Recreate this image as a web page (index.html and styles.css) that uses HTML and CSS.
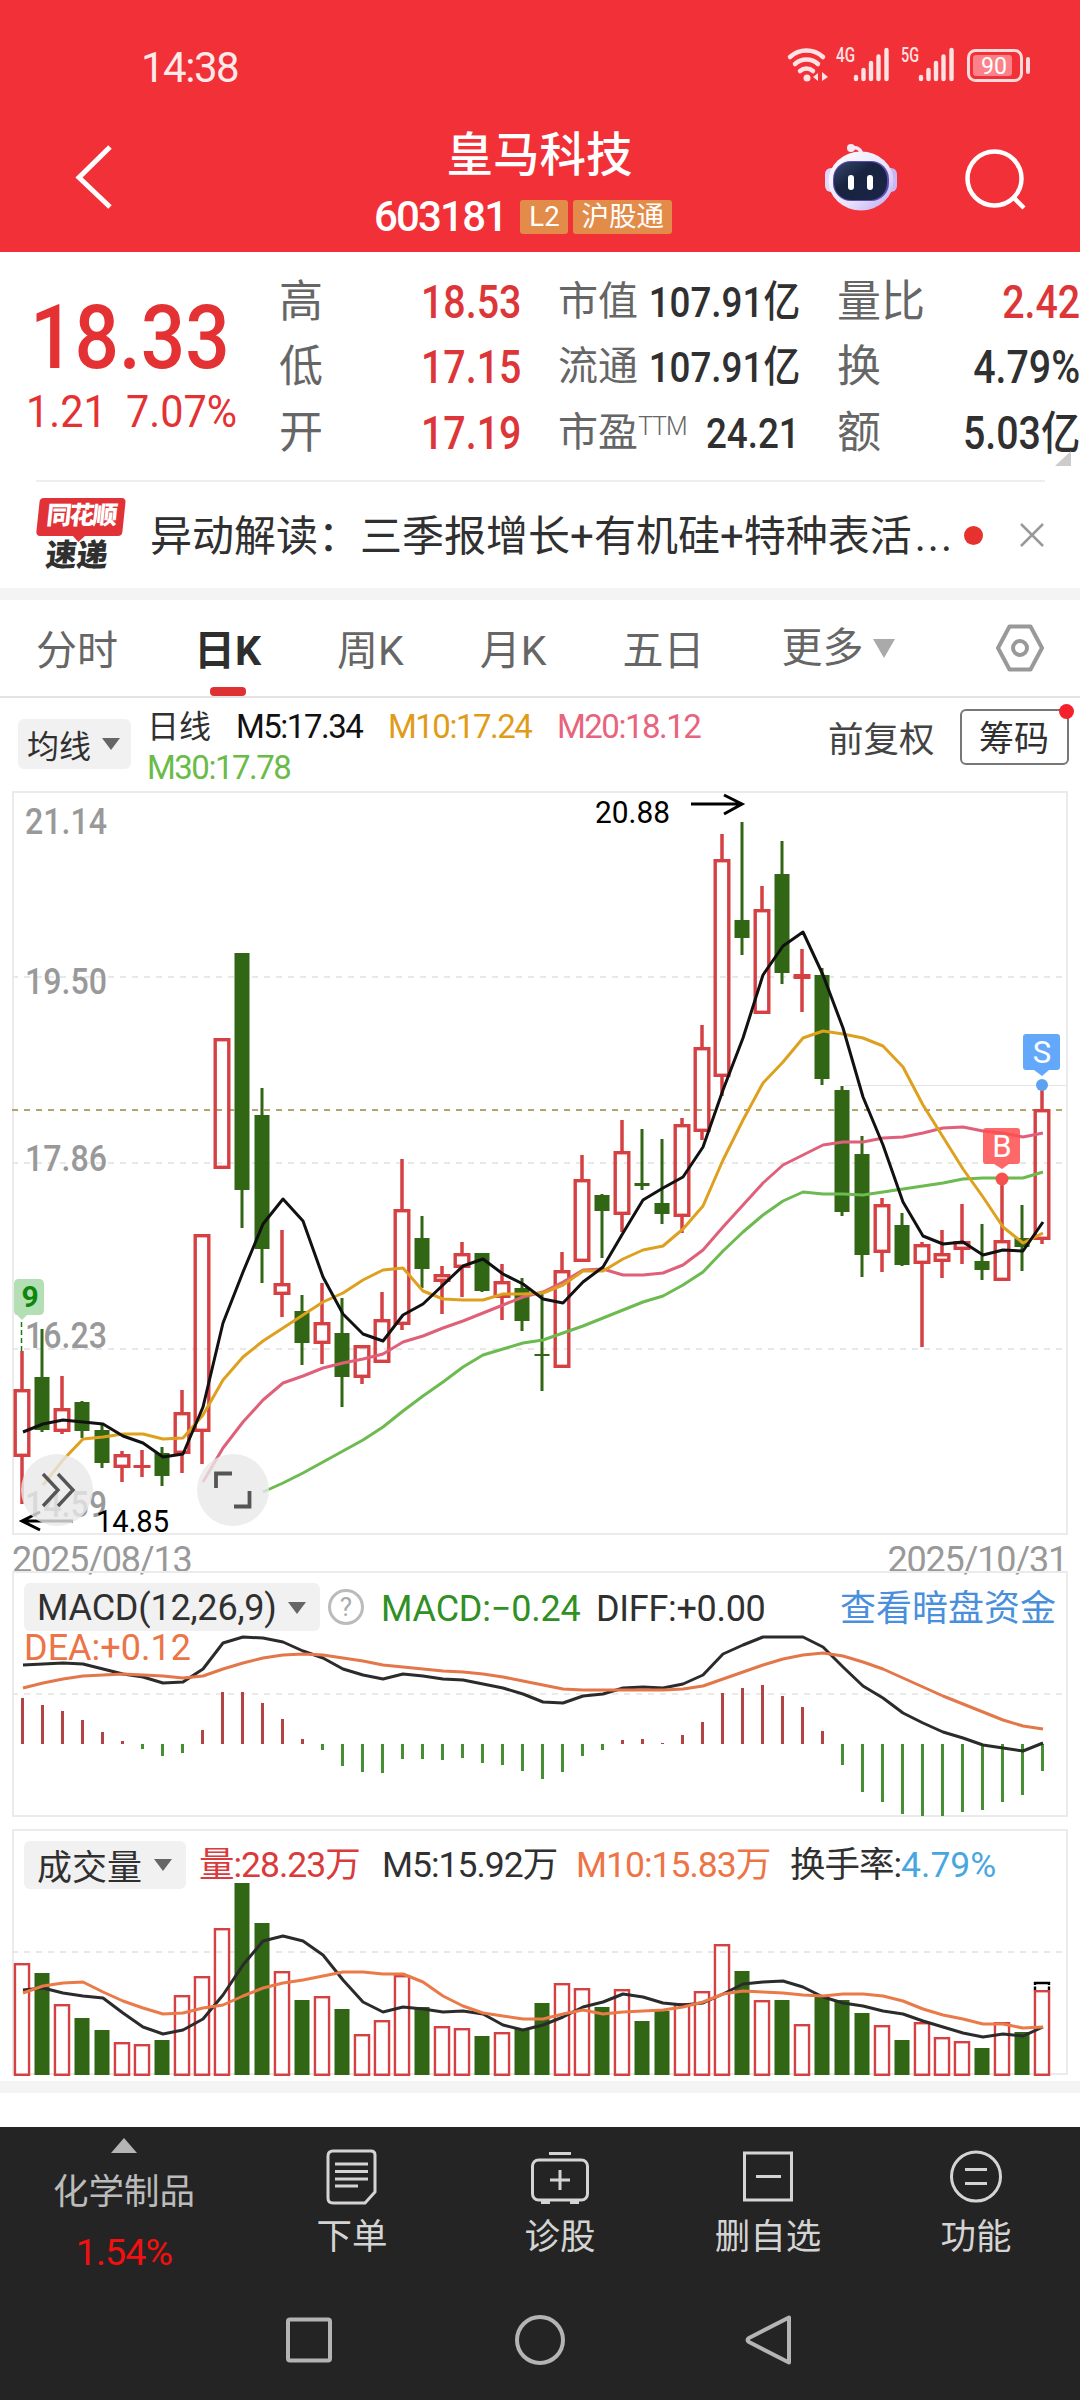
FILE: index.html
```html
<!DOCTYPE html>
<html lang="zh-CN">
<head>
    <meta charset="UTF-8">
    <meta name="viewport" content="width=device-width, initial-scale=1.0">
    <title>皇马科技 603181</title>
    <link rel="stylesheet" href="styles.css">
</head>
<body>
    <header class="top">
        <div class="status-bar">
            <span class="time">14:38</span>
            <svg class="status-icons" width="250" height="50" viewBox="784 35 250 50">
                <g fill="none" stroke="#ffe3e3" stroke-width="4.5" stroke-linecap="round">
                    <path d="M790 57a24 24 0 0 1 33 0"/>
                    <path d="M795 64a17 17 0 0 1 23 0"/>
                    <path d="M800 71a10 10 0 0 1 13 0"/>
                </g>
                <circle cx="807" cy="78" r="3.5" fill="#ffe3e3"/>
                <path d="M818 73v8l-5-4zM822 81v-9l6 5z" fill="#ffe3e3"/>
                <text x="836" y="62" class="net" textLength="19" lengthAdjust="spacingAndGlyphs">4G</text>
                <text x="901" y="62" class="net" textLength="18" lengthAdjust="spacingAndGlyphs">5G</text>
                <g stroke="#ffe3e3" stroke-width="4.4" stroke-linecap="round">
                    <path d="M856 77v2M863.500 70v9M871 63v16M878.500 56.500v22.500M886.500 50v29"/>
                    <path d="M921 77v2M928.500 70v9M936 63v16M943.500 56.500v22.500M951.500 50v29"/>
                </g>
                <rect x="968.500" y="50.500" width="53" height="30" rx="7" fill="none" stroke="#ffdada" stroke-width="3"/>
                <rect x="973" y="55" width="39" height="21" rx="3" fill="#fb8289"/>
                <path d="M1028 59v13" stroke="#ffdada" stroke-width="4" stroke-linecap="round"/>
                <text x="981" y="74" class="battery" textLength="26" lengthAdjust="spacingAndGlyphs">90</text>
            </svg>
        </div>
        <div class="title-bar">
            <svg class="back" width="50" height="76" viewBox="70 139 50 76">
                <path d="M110 147L79 177.500L110 207" fill="none" stroke="#fff" stroke-width="5"/>
            </svg>
            <div class="stock">
                <h1>皇马科技</h1>
                <div class="code-row">
                    <span class="code">603181</span>
                    <span class="badge">L2</span>
                    <span class="badge">沪股通</span>
                </div>
            </div>
            <svg class="tools" width="210" height="76" viewBox="820 139 210 76">
                <defs>
                    <linearGradient id="shell" x1="0" y1="0" x2="1" y2="1">
                        <stop offset="0" stop-color="#ffffff"/>
                        <stop offset=".6" stop-color="#e9e2fb"/>
                        <stop offset="1" stop-color="#b9a3f2"/>
                    </linearGradient>
                    <linearGradient id="face" x1="0" y1="0" x2="1" y2="1">
                        <stop offset="0" stop-color="#3b4870"/>
                        <stop offset=".4" stop-color="#17233f"/>
                        <stop offset="1" stop-color="#1b2547"/>
                    </linearGradient>
                </defs>
                <path d="M850 149q10-4 12 6" fill="none" stroke="#f4e8f6" stroke-width="3.500"/>
                <circle cx="851" cy="148" r="4" fill="#f4e8f6"/>
                <rect x="825" y="168" width="12" height="24" rx="6" fill="#e2d6fa"/>
                <rect x="884" y="168" width="13" height="24" rx="6" fill="#c9b6f5"/>
                <ellipse cx="861" cy="181" rx="32.500" ry="29.500" fill="url(#shell)"/>
                <rect x="833" y="161" width="56" height="40" rx="18" fill="#5a4cb0"/>
                <rect x="834" y="162" width="53" height="38" rx="17" fill="url(#face)"/>
                <rect x="848" y="175" width="6" height="15" rx="3" fill="#fff"/>
                <rect x="867" y="175" width="6" height="15" rx="3" fill="#fff"/>
                <circle cx="994.500" cy="178.500" r="27" fill="none" stroke="#fff" stroke-width="4.500"/>
                <path d="M1013 197L1024 208" stroke="#fff" stroke-width="4.500"/>
            </svg>
        </div>
    </header>

    <section class="quote">
        <div class="price-box">
            <div class="price"><span>18.33</span></div>
            <div class="change"><span>1.21</span><span>7.07%</span></div>
        </div>
        <div class="stats">
            <div class="stat"><label>高</label><b class="up">18.53</b></div>
            <div class="stat"><label>低</label><b class="up">17.15</b></div>
            <div class="stat"><label>开</label><b class="up">17.19</b></div>
        </div>
        <div class="stats mid">
            <div class="stat"><label>市值</label><b>107.91亿</b></div>
            <div class="stat"><label>流通</label><b>107.91亿</b></div>
            <div class="stat"><label>市盈<sup>TTM</sup></label><b>24.21</b></div>
        </div>
        <div class="stats">
            <div class="stat"><label>量比</label><b class="up">2.42</b></div>
            <div class="stat"><label>换</label><b>4.79%</b></div>
            <div class="stat"><label>额</label><b>5.03亿</b></div>
        </div>
        <i class="corner"></i>
    </section>

    <section class="news">
        <div class="news-logo">
            <span class="logo-top">同花顺</span>
            <span class="logo-bottom">速递</span>
        </div>
        <p>异动解读：三季报增长+有机硅+特种表活<span class="dots">...</span></p>
        <i class="dot"></i>
        <svg width="26" height="26" viewBox="0 0 26 26"><path d="M2 2L24 24M24 2L2 24" stroke="#999" stroke-width="2.500"/></svg>
    </section>

    <nav class="tabs">
        <a>分时</a>
        <a class="active">日K</a>
        <a>周K</a>
        <a>月K</a>
        <a>五日</a>
        <a class="more">更多<i class="tri"></i></a>
        <svg width="50" height="48" viewBox="0 0 50 48">
            <path d="M14.500 2.500h21L47 24 35.500 45.500h-21L3 24z" fill="none" stroke="#999" stroke-width="4" stroke-linejoin="round"/>
            <circle cx="25" cy="24" r="7" fill="none" stroke="#999" stroke-width="4"/>
        </svg>
    </nav>

    <section class="ma-row">
        <button class="pill ma-pill">均线<i class="tri"></i></button>
        <div class="ma-list">
            <span class="cjk">日线</span>
            <span class="m5">M5:17.34</span>
            <span class="m10">M10:17.24</span>
            <span class="m20">M20:18.12</span>
            <span class="m30">M30:17.78</span>
        </div>
        <span class="adjust">前复权</span>
        <button class="chips">筹码<i></i></button>
    </section>

    <svg id="kline" width="1080" height="750" viewBox="0 790 1080 750"></svg>
    <div class="dates"><span>2025/08/13</span><span>2025/10/31</span></div>

    <section class="panel macd">
        <svg id="macd" width="1080" height="250" viewBox="0 1571 1080 250"></svg>
        <div class="legend">
            <button class="pill">MACD(12,26,9)<i class="tri"></i></button>
            <i class="help">?</i>
            <span class="green">MACD:−0.24</span>
            <span class="diff">DIFF:+0.00</span>
            <a>查看暗盘资金</a>
        </div>
        <div class="legend-2">DEA:+0.12</div>
    </section>

    <section class="panel volume">
        <svg id="volume" width="1080" height="260" viewBox="0 1821 1080 260"></svg>
        <div class="legend">
            <button class="pill">成交量<i class="tri"></i></button>
            <span class="red">量:28.23万</span>
            <span class="v5">M5:15.92万</span>
            <span class="v10">M10:15.83万</span>
            <span class="turn">换手率:<em>4.79%</em></span>
        </div>
    </section>
    <div class="band"></div>

    <footer>
        <div class="actions">
            <div class="sector">
                <i class="tri-up"></i>
                <span>化学制品</span>
                <b>1.54%</b>
            </div>
            <div class="action">
                <svg viewBox="0 0 60 60">
                    <path d="M11 4h38q4 0 4 4v37L43 56H11q-5 0-5-5V9q0-5 5-5z"/>
                    <path d="M13 17h33M13 24.500h33M13 32h33M13 39h23"/>
                </svg>
                <span>下单</span>
            </div>
            <div class="action">
                <svg viewBox="0 0 60 60">
                    <rect x="2.500" y="13" width="55" height="40" rx="6"/>
                    <path d="M19 6.500h22M30 23v20M20 33h20M11 55.500h9M40 55.500h9"/>
                </svg>
                <span>诊股</span>
            </div>
            <div class="action">
                <svg viewBox="0 0 60 60">
                    <rect x="6.500" y="6" width="47" height="47"/>
                    <path d="M18 29.500h25"/>
                </svg>
                <span>删自选</span>
            </div>
            <div class="action">
                <svg viewBox="0 0 60 60">
                    <circle cx="30" cy="29.500" r="24.500"/>
                    <path d="M19 22.500h22M19 36.500h22"/>
                </svg>
                <span>功能</span>
            </div>
        </div>
        <div class="sys-nav">
            <svg width="52" height="52" viewBox="0 0 52 52"><rect x="5" y="5.500" width="42" height="41" rx="2"/></svg>
            <svg width="52" height="52" viewBox="0 0 52 52"><circle cx="26" cy="26" r="23"/></svg>
            <svg width="52" height="52" viewBox="0 0 52 52"><path d="M44 3.500v45L4 28q-3-2 0-4z"/></svg>
        </div>
    </footer>

    <script src="script.js"></script>
</body>
</html>
```
FILE: styles.css
```css
* {
    margin: 0;
    padding: 0;
    box-sizing: border-box;
}

body {
    width: 1080px;
    height: 2400px;
    overflow: hidden;
    background: #fff;
    color: #303030;
    font-family: Roboto, "Noto Sans CJK SC", sans-serif;
}

svg {
    display: block;
}

i, em {
    font-style: normal;
}

button {
    border: none;
    font-family: inherit;
    color: inherit;
}

/* red header */
.top {
    height: 252px;
    background: #f13038;
    color: #fff;
}

.status-bar {
    height: 112px;
    padding: 35px 46px 0 141px;
    display: flex;
    justify-content: space-between;
}

.time {
    margin-top: 11px;
    font-size: 42px;
    line-height: 44px;
    letter-spacing: -1.500px;
    color: #ffe9e9;
}

.net {
    font-size: 20px;
    font-weight: 500;
    fill: #ffe3e3;
}

.battery {
    font-size: 24px;
    fill: #fff;
}

.title-bar {
    height: 140px;
    padding: 0 50px 0 70px;
    display: flex;
    justify-content: space-between;
}

.back,
.tools {
    margin-top: 27px;
}

.stock {
    width: 400px;
    margin-left: 150px;
    text-align: center;
}

.stock h1 {
    margin-top: 16px;
    margin-right: 11px;
    font-size: 46.500px;
    line-height: 54px;
    font-weight: 500;
}

.code-row {
    display: flex;
    justify-content: center;
    align-items: center;
    gap: 5px;
    height: 44px;
    margin-top: 13px;
    margin-right: 44px;
}

.code {
    font-size: 42px;
    line-height: 44px;
    letter-spacing: -1.800px;
    font-weight: 500;
    margin-right: 9px;
}

.badge {
    height: 34px;
    line-height: 33px;
    padding: 0 8px 0 9px;
    border-radius: 3px;
    background: #e38c4a;
    font-size: 27.500px;
}

/* quote */
.quote {
    position: relative;
    display: flex;
    height: 230px;
}

.price-box {
    width: 280px;
    color: #e43234;
}

.price {
    height: 90px;
    margin-top: 41px;
    padding-left: 30px;
    font-size: 89px;
    line-height: 90px;
    font-weight: 500;
}

.price span,
.change span,
.stat b {
    display: inline-block;
    transform: scaleX(.88);
    transform-origin: left center;
}

.change {
    display: flex;
    margin-top: 3px;
    padding-left: 26px;
    font-size: 44px;
    line-height: 52px;
}

.change span {
    width: 100px;
    transform: scaleX(.94);
}

.stats {
    width: 241px;
    margin-right: 38px;
    padding-top: 17px;
    flex-shrink: 0;
}

.stats:nth-child(4) {
    margin-right: 0;
    width: 242px;
}

.stat {
    display: flex;
    justify-content: space-between;
    align-items: center;
    height: 65.500px;
    white-space: nowrap;
}

.stat label {
    font-size: 44px;
    line-height: 60px;
    color: #666;
    margin-left: -1px;
}

.mid .stat label {
    font-size: 40px;
}

.stat sup {
    font-size: 25px;
    line-height: 10px;
    font-weight: 300;
    letter-spacing: -1px;
    vertical-align: 11px;
}

.stat b {
    font-size: 46px;
    line-height: 60px;
    font-weight: 500;
    transform: scaleX(.855);
    transform-origin: right center;
}

.mid .stat b {
    margin-left: -30px;
    font-size: 43px;
}

.up {
    color: #dc3639;
}

.corner {
    position: absolute;
    right: 9px;
    bottom: 16px;
    border-left: 16px solid transparent;
    border-bottom: 15px solid #ccc;
}

/* news strip */
.news {
    display: flex;
    align-items: center;
    height: 108px;
    margin: -2px 35px 0 36px;
    border-top: 2px solid #eee;
}

.news-logo {
    width: 88px;
    margin-right: 28px;
    text-align: center;
    transform: skewX(-6deg);
    font-weight: 900;
}

.logo-top {
    display: block;
    height: 38px;
    line-height: 36px;
    border-radius: 4px;
    background: #e13238;
    color: #fff;
    font-size: 25px;
    letter-spacing: -2px;
}

.logo-top::after {
    content: "";
    display: block;
    width: 0;
    margin: 0 auto;
    border: 7px solid transparent;
    border-top-color: #e13238;
    position: relative;
    top: 1px;
}

.logo-bottom {
    display: block;
    margin-top: 3px;
    font-size: 31px;
    line-height: 34px;
}

.news p {
    width: 805px;
    padding-top: 3px;
    font-size: 42px;
    line-height: 60px;
    white-space: nowrap;
}

.dots {
    letter-spacing: 2px;
    margin-left: 3px;
}

.dot {
    width: 19px;
    height: 19px;
    margin: 0 36px 0 10px;
    border-radius: 50%;
    background: #e6312f;
    flex-shrink: 0;
}

.news svg {
    flex-shrink: 0;
}

/* period tabs */
.tabs {
    display: flex;
    align-items: center;
    height: 110px;
    padding: 0 35px 0 36px;
    border-top: 12px solid #f4f4f4;
    border-bottom: 2px solid #e4e4e4;
    font-size: 41px;
    color: #666;
}

.tabs a {
    position: relative;
    height: 96px;
    line-height: 102px;
    margin-right: 76px;
    white-space: nowrap;
}

.tabs a.active {
    color: #2e2e2e;
    font-weight: 700;
}

.tabs .active::after {
    content: "";
    position: absolute;
    left: 16px;
    bottom: 0;
    width: 36px;
    height: 9px;
    border-radius: 4px;
    background: #dd3133;
}

.tabs .more {
    display: flex;
    align-items: center;
    margin-left: 1px;
    margin-right: auto;
}

.tri {
    display: inline-block;
    border: 9px solid transparent;
    border-top: 12px solid #666;
    border-bottom: 0;
}

.more .tri {
    border-width: 19px 11px 0;
    border-top-color: #aaa;
    margin-left: 9px;
}

/* moving averages */
.ma-row {
    display: flex;
    height: 92px;
    padding-left: 18px;
}

.pill {
    display: flex;
    align-items: center;
    justify-content: space-between;
    background: #f1f1f1;
    border-radius: 6px;
}

.ma-pill {
    width: 113px;
    height: 50px;
    margin-top: 21px;
    padding: 0 11px 0 9px;
    font-size: 32px;
}

.ma-list {
    display: grid;
    grid-template-columns: 89px 152px 169px 270px;
    grid-template-rows: 41px 41px;
    width: 681px;
    margin: 8px 0 0 16px;
    font-size: 33px;
    line-height: 42px;
    letter-spacing: -1.500px;
    white-space: nowrap;
}

.ma-list .cjk {
    font-size: 32px;
    letter-spacing: 0;
}

.m5 { color: #111; }
.m10 { color: #e09c18; }
.m20 { color: #e8637c; }
.m30 { color: #6abb48; }

.adjust {
    margin-top: 16px;
    font-size: 35.500px;
    line-height: 52px;
    color: #444;
}

.chips {
    position: relative;
    width: 109px;
    height: 56px;
    margin: 11px 0 0 25px;
    padding-top: 2px;
    border: 2px solid #777;
    border-radius: 6px;
    background: #fff;
    font-size: 35px;
    line-height: 54px;
}

.chips i {
    position: absolute;
    right: -7px;
    top: -7px;
    width: 15px;
    height: 15px;
    border-radius: 50%;
    background: #f5222d;
}

.dates {
    display: flex;
    justify-content: space-between;
    height: 31px;
    padding: 0 13px 0 12px;
    font-size: 36px;
    line-height: 41px;
    letter-spacing: -1.200px;
    color: #999;
}

/* indicator panels */
.panel {
    position: relative;
}

.panel > svg {
    position: absolute;
    left: 0;
    top: 0;
}

.macd { height: 250px; }
.volume { height: 260px; }

.legend,
.legend-2 {
    position: relative;
    display: flex;
    align-items: center;
    height: 48px;
    font-size: 36px;
    line-height: 52px;
    white-space: nowrap;
}

.macd .legend {
    padding: 0 24px;
    top: 12px;
}

.legend .pill {
    height: 48px;
    font-size: 36px;
    padding: 2px 14px 0 13px;
}

.macd .pill {
    width: 296px;
    letter-spacing: -.200px;
}

.macd .legend span,
.macd .legend a {
    padding-top: 3px;
}

.help {
    width: 36px;
    height: 36px;
    margin: 0 17px 0 8px;
    border: 3px solid #bbb;
    border-radius: 50%;
    color: #aaa;
    font-size: 26px;
    line-height: 30px;
    text-align: center;
}

.green {
    width: 215px;
    color: #319024;
    letter-spacing: -.200px;
}

.diff {
    letter-spacing: -.300px;
}

.legend a {
    margin-left: auto;
    color: #4a8fdc;
}

.legend-2 {
    top: 9px;
    height: 40px;
    padding-left: 24px;
    color: #ec7446;
}

.volume .legend {
    padding-left: 24px;
    top: 20px;
    font-size: 35.500px;
    letter-spacing: -1px;
}

.volume .legend span {
    line-height: 44px;
}

.volume .pill {
    width: 162px;
    font-size: 35px;
    margin-right: 13px;
    padding-top: 0;
    padding-bottom: 1px;
}

.red { width: 183px; color: #d93a3c; }
.v5 { width: 194px; }
.v10 { width: 214px; color: #ec7446; }
.turn em { color: #49a6de; letter-spacing: 0; }

.band {
    height: 12px;
    background: #f4f4f4;
}

/* footer */
footer {
    height: 273px;
    margin-top: 34px;
    background: #242424;
    color: #d4d4d4;
}

.actions {
    display: flex;
    height: 160px;
}

.sector {
    width: 248px;
    display: flex;
    flex-direction: column;
    align-items: center;
    padding-top: 11px;
    font-size: 35.500px;
}

.tri-up {
    border: 13px solid transparent;
    border-bottom: 15px solid #b5b5b5;
    border-top: 0;
}

.sector span {
    line-height: 50px;
    margin-top: 14px;
    color: #bbb;
}

.sector b {
    margin-top: 15px;
    font-size: 37.500px;
    font-weight: 400;
    line-height: 40px;
    letter-spacing: -.800px;
    color: #f31010;
}

.action {
    width: 208px;
    display: flex;
    flex-direction: column;
    align-items: center;
    padding-top: 20px;
    font-size: 35.500px;
    line-height: 50px;
}

.action svg {
    width: 60px;
    height: 60px;
    fill: none;
    stroke: #d4d4d4;
    stroke-width: 3;
    margin-bottom: 5px;
}

.sys-nav {
    display: flex;
    gap: 179px;
    padding: 27px 0 0 283px;
}

.sys-nav svg {
    fill: none;
    stroke: #b4b4b4;
    stroke-width: 4;
    stroke-linejoin: round;
}

/* chart text */
.axis {
    font-size: 36px;
    font-weight: 500;
    fill: #999;
}

.mark {
    font-size: 31px;
    fill: #000;
}

.tag {
    font-size: 31px;
    fill: #fff;
    text-anchor: middle;
}

.tag-nine {
    font-size: 30px;
    font-weight: 700;
    fill: #0c870c;
    text-anchor: middle;
}
```
FILE: script.js
```js
const RED = '#d54043';
const GREEN = '#306614';
const x = i => 22 + i * 20;

// [up?, high, top, bottom, low]
const candles = [
    [1, 1351, 1389, 1457, 1504], [0, 1329, 1377, 1430, 1432], [1, 1376, 1408, 1432, 1434], [0, 1401, 1402, 1431, 1438],
    [0, 1425, 1430, 1463, 1468], [1, 1451, 1454, 1468, 1482], [1, 1450, 1465, 1468, 1477], [0, 1447, 1453, 1476, 1486],
    [1, 1390, 1412, 1454, 1473], [1, 1234, 1234, 1432, 1464], [1, 1038, 1038, 1169, 1169], [0, 953, 953, 1190, 1228],
    [0, 1088, 1115, 1249, 1283], [1, 1230, 1283, 1295, 1317], [0, 1295, 1311, 1343, 1365], [1, 1283, 1322, 1344, 1364],
    [0, 1298, 1333, 1377, 1407], [1, 1345, 1345, 1378, 1384], [1, 1292, 1319, 1363, 1363], [1, 1159, 1209, 1325, 1330],
    [0, 1216, 1238, 1269, 1288], [1, 1266, 1274, 1282, 1314], [1, 1242, 1253, 1268, 1297], [0, 1253, 1253, 1291, 1292],
    [1, 1264, 1281, 1298, 1320], [0, 1278, 1288, 1321, 1331], [0, 1293, 1354, 1356, 1391], [1, 1252, 1270, 1368, 1368],
    [1, 1155, 1179, 1262, 1262], [0, 1194, 1195, 1211, 1258], [1, 1120, 1151, 1215, 1232], [0, 1129, 1183, 1186, 1190],
    [0, 1139, 1203, 1214, 1224], [1, 1118, 1124, 1217, 1233], [1, 1025, 1047, 1132, 1140], [1, 834, 859, 1077, 1096],
    [0, 822, 920, 938, 955], [1, 886, 909, 1014, 1014], [0, 841, 874, 973, 984], [1, 949, 974, 979, 1012],
    [0, 968, 975, 1079, 1085], [0, 1086, 1090, 1212, 1216], [0, 1136, 1154, 1255, 1277], [1, 1198, 1204, 1253, 1272],
    [0, 1213, 1225, 1265, 1266], [1, 1242, 1244, 1264, 1347], [1, 1230, 1253, 1262, 1278], [1, 1204, 1241, 1250, 1264],
    [0, 1224, 1261, 1270, 1280], [1, 1179, 1240, 1281, 1281], [0, 1205, 1238, 1247, 1271], [1, 1085, 1109, 1240, 1244]
];

const ma5 = [1432, 1424, 1420, 1422, 1424, 1436, 1443, 1457, 1454, 1407, 1323, 1272, 1224, 1199, 1221, 1277, 1314, 1334, 1341, 1315, 1304, 1285, 1266, 1259, 1274, 1284, 1299, 1303, 1282, 1267, 1233, 1200, 1188, 1177, 1147, 1090, 1038, 975, 946, 932, 975, 1028, 1097, 1145, 1202, 1236, 1244, 1242, 1255, 1250, 1251, 1222];
const ma10 = [1485, 1460, 1439, 1437, 1434, 1434, 1439, 1438, 1415, 1380, 1357, 1341, 1328, 1315, 1302, 1293, 1280, 1270, 1268, 1291, 1299, 1300, 1300, 1294, 1294, 1293, 1285, 1271, 1271, 1259, 1250, 1246, 1229, 1206, 1160, 1120, 1083, 1062, 1038, 1031, 1034, 1038, 1046, 1067, 1105, 1137, 1169, 1197, 1227, 1243, 1233];
const ma20 = [1482, 1448, 1422, 1400, 1383, 1376, 1368, 1363, 1359, 1354, 1342, 1336, 1328, 1321, 1313, 1305, 1297, 1292, 1282, 1270, 1269, 1275, 1275, 1273, 1265, 1250, 1227, 1205, 1183, 1165, 1155, 1145, 1142, 1142, 1138, 1137, 1133, 1128, 1127, 1131, 1133, 1137, 1133];
const ma30 = [1492, 1483, 1473, 1462, 1451, 1440, 1427, 1411, 1396, 1382, 1367, 1355, 1349, 1343, 1340, 1333, 1326, 1318, 1310, 1302, 1296, 1285, 1272, 1251, 1232, 1215, 1201, 1192, 1194, 1194, 1195, 1192, 1189, 1186, 1183, 1179, 1178, 1178, 1178, 1172];

const bars = [1698, 1705, 1711, 1720, 1732, 1741, 1749, 1756, 1753, 1730, 1692, 1692, 1703, 1719, 1739, 1750, 1766, 1772, 1773, 1759, 1759, 1760, 1758, 1763, 1765, 1771, 1779, 1772, 1756, 1750, 1740, 1739, 1743, 1735, 1722, 1693, 1688, 1685, 1696, 1707, 1731, 1765, 1792, 1802, 1814, 1816, 1816, 1812, 1810, 1802, 1795, 1771];
const diff = [1665, 1664, 1663, 1664, 1669, 1674, 1677, 1683, 1682, 1669, 1643, 1637, 1638, 1642, 1651, 1658, 1669, 1675, 1679, 1674, 1676, 1679, 1680, 1684, 1688, 1694, 1702, 1703, 1696, 1694, 1688, 1687, 1688, 1684, 1675, 1654, 1645, 1637, 1637, 1637, 1647, 1667, 1686, 1698, 1713, 1723, 1732, 1738, 1745, 1748, 1751, 1743];
const dea = [1688, 1683, 1679, 1676, 1675, 1674, 1675, 1676, 1678, 1676, 1669, 1663, 1658, 1655, 1654, 1655, 1658, 1661, 1665, 1667, 1669, 1671, 1672, 1674, 1677, 1681, 1685, 1689, 1690, 1690, 1690, 1690, 1690, 1689, 1686, 1679, 1672, 1665, 1659, 1655, 1653, 1656, 1662, 1669, 1678, 1687, 1696, 1704, 1712, 1720, 1726, 1729];

const volumes = [1963, 1973, 2004, 2018, 2030, 2042, 2044, 2040, 1995, 1976, 1928, 1883, 1923, 1971, 2000, 1996, 2009, 2034, 2020, 1975, 2007, 2026, 2028, 2036, 2032, 2029, 2003, 1983, 1988, 2007, 1989, 2021, 2011, 2003, 1991, 1944, 1971, 2000, 2000, 2024, 1997, 2000, 2013, 2025, 2040, 2022, 2037, 2041, 2048, 2022, 2032, 1990];
const vol5 = [1990, 1988, 1993, 1996, 1998, 2013, 2027, 2034, 2030, 2019, 1995, 1965, 1941, 1936, 1941, 1955, 1980, 2002, 2012, 2007, 2009, 2012, 2011, 2014, 2025, 2030, 2025, 2017, 2007, 2002, 1994, 1997, 2003, 2005, 2003, 1994, 1984, 1982, 1981, 1987, 1997, 2003, 2006, 2011, 2014, 2021, 2027, 2033, 2037, 2034, 2036, 2027];
const vol10 = [1993, 1986, 1983, 1982, 1992, 2001, 2008, 2014, 2013, 2008, 2005, 1996, 1988, 1983, 1980, 1976, 1972, 1972, 1974, 1974, 1982, 1996, 2006, 2013, 2016, 2019, 2019, 2014, 2010, 2014, 2012, 2011, 2010, 2007, 2002, 1994, 1991, 1992, 1993, 1995, 1996, 1994, 1994, 1996, 2001, 2009, 2015, 2019, 2024, 2024, 2028, 2027];

function rect(left, top, w, h, fill) {
    return `<rect x="${left}" y="${top}" width="${w}" height="${h}" fill="${fill}"/>`;
}

function hollow(cx, top, bottom, w, sw) {
    if (bottom - top <= sw * 2) return rect(cx - w / 2, top, w, bottom - top, RED);
    return `<rect x="${cx - w / 2 + sw / 2}" y="${top + sw / 2}" width="${w - sw}" height="${bottom - top - sw}" fill="none" stroke="${RED}" stroke-width="${sw}"/>`;
}

function line(data, color, start = 0, w = 3) {
    const points = data.map((y, i) => `${x(i + start) + 1},${y}`).join(' ');
    return `<polyline points="${points}" fill="none" stroke="${color}" stroke-width="${w}" stroke-linejoin="round"/>`;
}

function frame(top, bottom) {
    return `<rect x="13" y="${top}" width="1054" height="${bottom - top}" fill="none" stroke="#ebebeb" stroke-width="2"/>`;
}

function dash(y, color = '#e8e8e8') {
    return `<path d="M12 ${y}H1066" stroke="${color}" stroke-width="2" stroke-dasharray="6 6"/>`;
}

function text(cls, left, y, w, str) {
    return `<text class="${cls}" x="${left}" y="${y}" textLength="${w}" lengthAdjust="spacingAndGlyphs">${str}</text>`;
}

function drawKline() {
    let s = frame(792, 1534) + dash(977) + dash(1163) + dash(1349);
    s += text('axis', 25, 834, 82, '21.14') + text('axis', 25, 994, 82, '19.50') + text('axis', 25, 1171, 82, '17.86');
    s += text('axis', 25, 1348, 82, '16.23') + text('axis', 25, 1517, 82, '14.59');
    s += dash(1110, '#b3a36f');
    s += '<path d="M845 1085.500H1066" stroke="#e3e3e3" stroke-width="1"/>';

    candles.forEach(([up, high, top, bottom, low], i) => {
        const cx = x(i);
        if (up) {
            s += rect(cx - 1.75, high, 3.5, top - high, RED) + rect(cx - 1.75, bottom, 3.5, low - bottom, RED);
            s += hollow(cx, top, bottom, 17, 3.4);
        } else {
            s += rect(cx - 1.5, high, 3, low - high, GREEN) + rect(cx - 7.5, top, 15, bottom - top, GREEN);
        }
    });

    s += line(ma30, '#6cba50', 12) + line(ma20, '#e0607a', 9) + line(ma10, '#dea01f', 1) + line(ma5, '#111');

    // highest and lowest price
    s += text('mark', 595, 823, 75, '20.88') + text('mark', 96, 1532, 73, '14.85');
    s += '<path d="M691 804H741M724 795L742 804L724 814" fill="none" stroke="#000" stroke-width="3"/>';
    s += '<path d="M73 1521H23M40 1512L22 1521L40 1530" fill="none" stroke="#000" stroke-width="3"/>';

    // nine-turn marker
    s += '<path d="M21.500 1322V1351" stroke="#14800f" stroke-width="1.500" stroke-dasharray="5 3"/>';
    s += '<path d="M19 1279H39Q44 1279 44 1284V1310Q44 1315 39 1315H27L22 1320L17 1315Q14 1315 14 1310V1284Q14 1279 19 1279Z" fill="#b4deb4"/>';
    s += '<text class="tag-nine" x="30" y="1307">9</text>';

    // trade markers
    s += '<path d="M986 1128H1017Q1020 1128 1020 1131V1161Q1020 1164 1017 1164H1009L1002 1169L994 1164H986Q983 1164 983 1161V1131Q983 1128 986 1128Z" fill="#ff4d4f" fill-opacity=".85"/>';
    s += '<circle cx="1002" cy="1179" r="6.500" fill="#f4514f"/><text class="tag" x="1002" y="1157">B</text>';
    s += '<path d="M1026 1034H1057Q1060 1034 1060 1037V1067Q1060 1070 1057 1070H1049L1042 1076L1034 1070H1026Q1023 1070 1023 1067V1037Q1023 1034 1026 1034Z" fill="#64a8fc"/>';
    s += '<circle cx="1042" cy="1085" r="6" fill="#5da2f2"/><text class="tag" x="1042" y="1063">S</text>';

    // round buttons over the chart
    s += '<g fill="#e8e8e8" fill-opacity=".8"><circle cx="57" cy="1490" r="36"/><circle cx="233" cy="1490" r="36"/></g>';
    s += '<g fill="none" stroke="#555"><path d="M43 1474L58 1490L43 1506M58 1474L73 1490L58 1506" stroke-width="3.400"/>';
    s += '<path d="M216 1488V1473.500H232M234 1506.500H249.500V1491" stroke-width="3.800"/></g>';
    document.getElementById('kline').innerHTML = s;
}

function drawMacd() {
    let s = frame(1572, 1816) + dash(1694, '#ece9e9');
    bars.forEach((y, i) => {
        s += y < 1744 ? rect(x(i) - 1, y, 3, 1744 - y, '#b34446') : rect(x(i) - 1, 1744, 3, y - 1744, '#478f34');
    });
    s += line(diff, '#2b2b2b') + line(dea, '#e37749');
    document.getElementById('macd').innerHTML = s;
}

function drawVolume() {
    let s = frame(1830, 2074) + dash(1952);
    volumes.forEach((y, i) => {
        s += candles[i][0] ? hollow(x(i), y, 2076, 16.5, 2.4) : rect(x(i) - 7.5, y, 15, 2075 - y, GREEN);
    });
    s += line(vol5, '#2b2b2b') + line(vol10, '#ea7a48');
    s += '<path d="M1035 1985V1983H1049V1985M1035 1986.500V1990M1049 1986.500V1990" fill="none" stroke="#000" stroke-width="2.400"/>';
    document.getElementById('volume').innerHTML = s;
}

drawKline();
drawMacd();
drawVolume();
```
